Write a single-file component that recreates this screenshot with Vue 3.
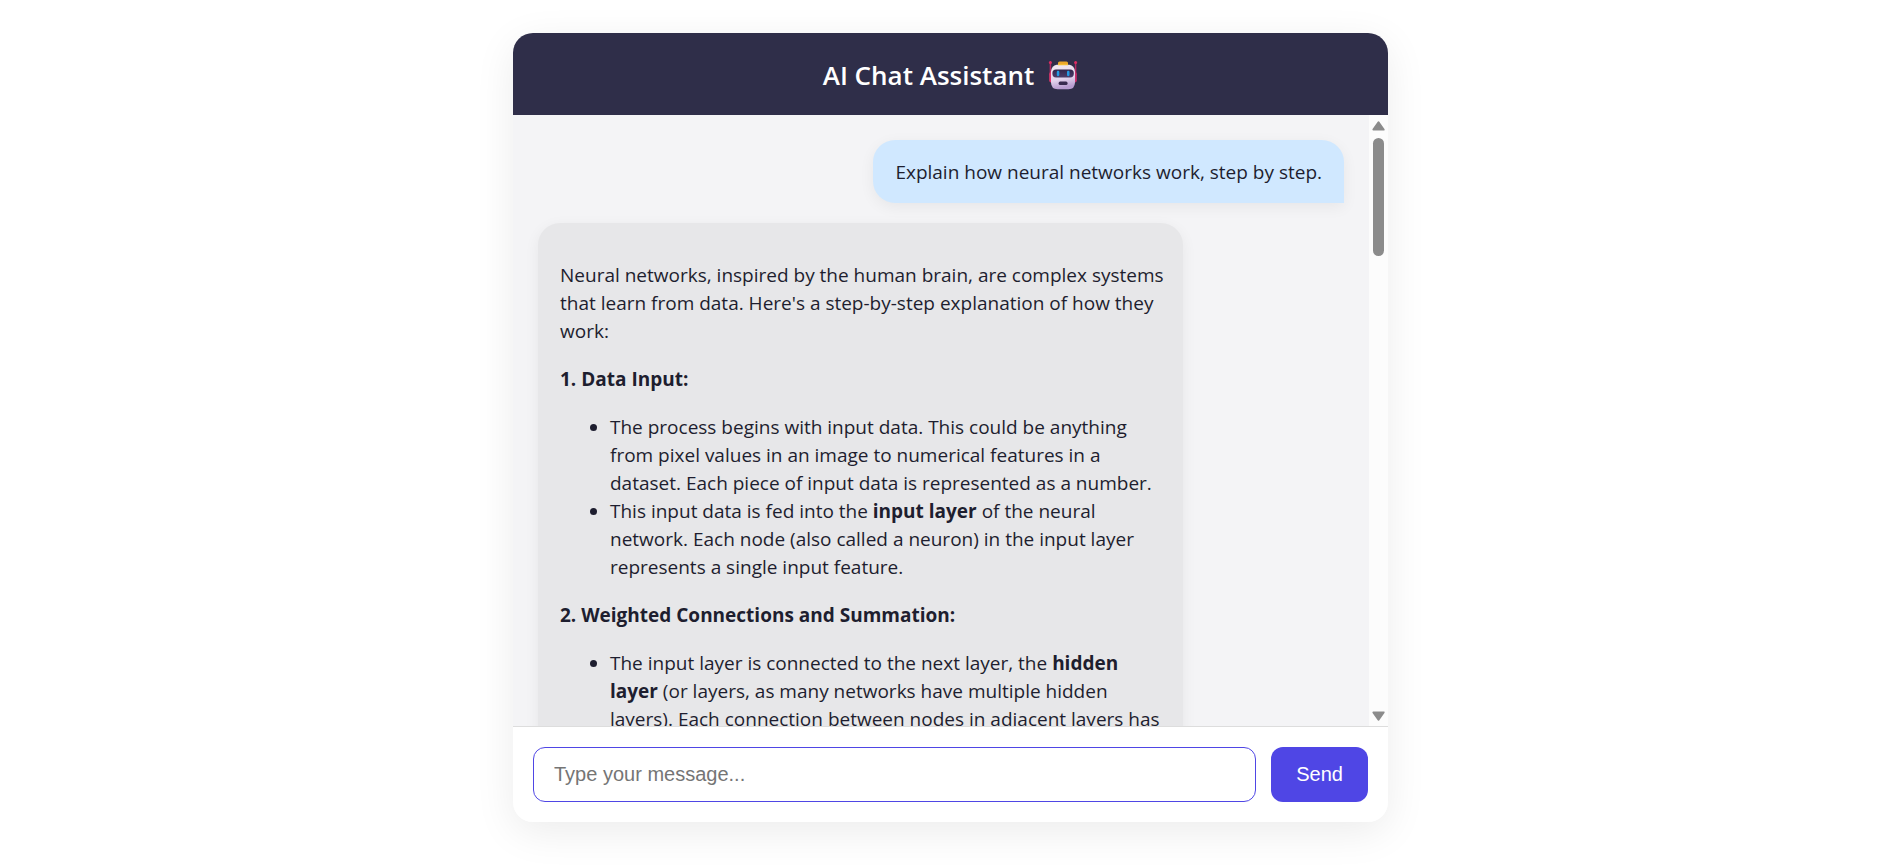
<script setup>
import { ref } from 'vue'

const draft = ref('')

const messages = [
  { role: 'user', text: 'Explain how neural networks work, step by step.' },
  {
    role: 'assistant',
    text: "Neural networks, inspired by the human brain, are complex systems that learn from data. Here's a step-by-step explanation of how they work:",
    sections: [
      {
        title: '1. Data Input:',
        items: [
          [{ t: 'The process begins with input data. This could be anything from pixel values in an image to numerical features in a dataset. Each piece of input data is represented as a number.' }],
          [
            { t: 'This input data is fed into the ' },
            { t: 'input layer', bold: true },
            { t: ' of the neural network. Each node (also called a neuron) in the input layer represents a single input feature.' }
          ]
        ]
      },
      {
        title: '2. Weighted Connections and Summation:',
        items: [
          [
            { t: 'The input layer is connected to the next layer, the ' },
            { t: 'hidden layer', bold: true },
            { t: ' (or layers, as many networks have multiple hidden layers). Each connection between nodes in adjacent layers has' }
          ]
        ]
      }
    ]
  }
]
</script>

<template>
  <div class="page">
    <main class="card">
      <header class="header">
        <h1 class="title">AI Chat Assistant</h1>
        <svg class="robot" viewBox="0 0 30 30" aria-hidden="true">
          <defs>
            <linearGradient id="face" x1="0" y1="0" x2="0.2" y2="1">
              <stop offset="0" stop-color="#f3eaf1" />
              <stop offset="0.65" stop-color="#e2d3ec" />
              <stop offset="1" stop-color="#b79cd0" />
            </linearGradient>
            <linearGradient id="visor" x1="0" y1="0" x2="0" y2="1">
              <stop offset="0" stop-color="#30264a" />
              <stop offset="1" stop-color="#4b3d6a" />
            </linearGradient>
          </defs>
          <path d="M2.4 2v13M27.6 2v13" stroke="#b52a62" stroke-width="1.5" stroke-linecap="round" />
          <circle cx="2.4" cy="2.4" r="1.5" fill="#dc2d62" />
          <circle cx="27.6" cy="2.4" r="1.5" fill="#dc2d62" />
          <rect x="1.2" y="12" width="5" height="10.4" rx="2" fill="#e0356c" />
          <rect x="23.8" y="12" width="5" height="10.4" rx="2" fill="#c9306c" />
          <rect x="10" y="1.4" width="10" height="5" rx="1.5" fill="#eda82a" />
          <path d="M8.6 4.8H21.4Q26.2 5.4 27 11.5V22.5Q26.8 29.2 20.5 29.2H9.5Q3.2 29.2 3 22.5V11.5Q3.8 5.4 8.6 4.8Z" fill="url(#face)" />
          <path d="M10 4.7h10" stroke="#f3bd35" stroke-width="1.2" />
          <rect x="4.4" y="9.4" width="21.4" height="8" rx="3.6" fill="url(#visor)" />
          <rect x="8.8" y="10.8" width="2.5" height="5.4" rx="1.1" fill="#2499e3" />
          <rect x="19" y="10.8" width="2.5" height="5.4" rx="1.1" fill="#2499e3" />
          <rect x="10.6" y="21.6" width="9" height="3.4" rx="1.6" fill="#382b4f" />
        </svg>
      </header>

      <div class="body">
        <section class="chat" aria-label="Conversation">
          <article v-for="(m, i) in messages" :key="i" class="bubble" :class="m.role">
            <template v-if="m.role === 'user'">{{ m.text }}</template>
            <template v-else>
              <p>{{ m.text }}</p>
              <template v-for="s in m.sections" :key="s.title">
                <p><strong>{{ s.title }}</strong></p>
                <ul>
                  <li v-for="(item, j) in s.items" :key="j">
                    <template v-for="(part, k) in item" :key="k"><strong v-if="part.bold">{{ part.t }}</strong><template v-else>{{ part.t }}</template></template>
                  </li>
                </ul>
              </template>
            </template>
          </article>
        </section>
        <div class="scrollbar" aria-hidden="true">
          <svg class="arrow" viewBox="0 0 13 10"><path d="M6.5 1.2 11.6 8.6H1.4Z" /></svg>
          <div class="thumb"></div>
          <svg class="arrow end" viewBox="0 0 13 10"><path d="M6.5 8.8 11.6 1.4H1.4Z" /></svg>
        </div>
      </div>

      <form class="composer" @submit.prevent>
        <input v-model="draft" class="field" type="text" placeholder="Type your message..." aria-label="Message" />
        <button class="send" type="submit">Send</button>
      </form>
    </main>
  </div>
</template>

<style>
body {
  background: #fff;
}
</style>

<style scoped>
.page {
  box-sizing: border-box;
  display: flex;
  justify-content: center;
  min-height: 100vh;
  padding: 33px 10px 0 12px;
  font-family: "Segoe UI", "Open Sans", "Noto Sans", sans-serif;
  color: #1e1e2f;
}

.card {
  display: flex;
  flex-direction: column;
  width: 100%;
  max-width: 875px;
  height: 91vh;
  border-radius: 20px;
  overflow: hidden;
  background: #fff;
  box-shadow: 0 10px 40px rgba(0, 0, 0, 0.08);
}

.header {
  display: flex;
  align-items: center;
  justify-content: center;
  gap: 14px;
  padding: 23px 20px 21px;
  background: #2f2e49;
  color: #fff;
}

.title {
  margin: 0;
  font-size: 26px;
  font-weight: 600;
  line-height: 38px;
}

.robot {
  width: 30px;
  height: 30px;
}

.body {
  display: flex;
  flex: 1;
  min-height: 0;
}

.chat {
  display: flex;
  flex: 1;
  flex-direction: column;
  gap: 20px;
  padding: 25px;
  overflow-y: auto;
  scrollbar-width: none;
  background: #f4f4f6;
}

.bubble {
  flex-shrink: 0;
  box-sizing: border-box;
  max-width: 80%;
  padding: 18px 22px 17px;
  border-radius: 22px;
  box-shadow: 0 4px 15px rgba(0, 0, 0, 0.06);
  font-size: 19px;
  line-height: 28px;
}

.user {
  align-self: flex-end;
  border-bottom-right-radius: 0;
  background: #d0e8ff;
}

.assistant {
  align-self: flex-start;
  border-bottom-left-radius: 0;
  background: #e7e7e9;
}

.bubble p {
  margin: 20px -12px 20px 0;
}

.bubble ul {
  margin: 20px 0;
  padding-left: 50px;
}

.scrollbar {
  box-sizing: border-box;
  display: flex;
  flex-direction: column;
  align-items: center;
  width: 19px;
  padding: 6px 0 5px;
  background: #fcfcfc;
}

.arrow {
  width: 13px;
  height: 10px;
  fill: #8b8b8b;
  stroke: #8b8b8b;
  stroke-width: 2;
  stroke-linejoin: round;
}

.thumb {
  width: 11px;
  height: 118px;
  margin-top: 7px;
  border-radius: 6px;
  background: #8b8b8b;
}

.end {
  margin-top: auto;
}

.composer {
  display: flex;
  gap: 15px;
  padding: 20px;
  border-top: 1px solid #ddd;
  background: #fff;
}

.field,
.send {
  box-sizing: border-box;
  height: 55px;
  border-radius: 12px;
  font-family: "Liberation Sans", Arial, sans-serif;
  font-size: 20px;
}

.field {
  flex: 1;
  min-width: 0;
  padding: 0 20px;
  border: 1px solid #4f46e5;
  background: #fff;
  color: #1e1e2f;
  outline: none;
}

.field::placeholder {
  color: #757575;
}

.send {
  padding: 0 25px;
  border: 0;
  background: #4f46e5;
  color: #fff;
  cursor: pointer;
}
</style>
